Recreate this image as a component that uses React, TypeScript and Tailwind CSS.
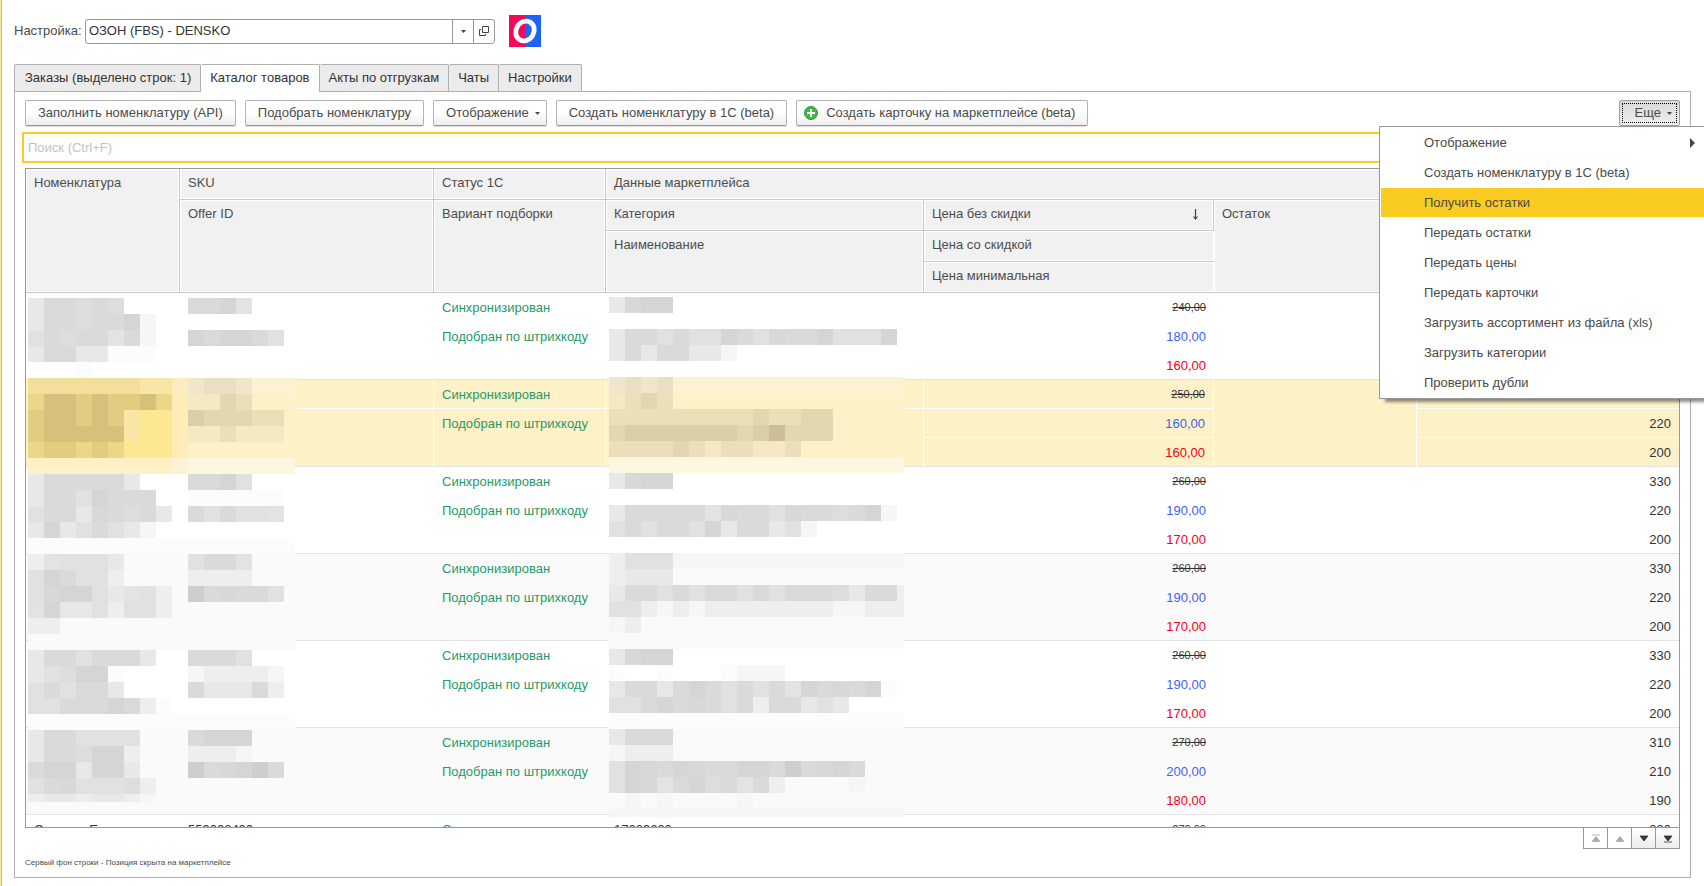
import { clsx } from "clsx";

interface Product {
  id: number;
  name?: string;
  sku?: string;
  category?: string;
  oldPrice: string;
  price: string;
  minPrice: string;
  values: string[];
  state?: "selected" | "hidden";
}

const products: Product[] = [
  { id: 1, oldPrice: "240,00", price: "180,00", minPrice: "160,00", values: ["310", "210", "190"] },
  { id: 2, oldPrice: "250,00", price: "160,00", minPrice: "160,00", values: ["330", "220", "200"], state: "selected" },
  { id: 3, oldPrice: "260,00", price: "190,00", minPrice: "170,00", values: ["330", "220", "200"] },
  { id: 4, oldPrice: "260,00", price: "190,00", minPrice: "170,00", values: ["330", "220", "200"], state: "hidden" },
  { id: 5, oldPrice: "260,00", price: "190,00", minPrice: "170,00", values: ["330", "220", "200"] },
  { id: 6, oldPrice: "270,00", price: "200,00", minPrice: "180,00", values: ["310", "210", "190"], state: "hidden" },
  {
    id: 7,
    name: "Сумочка Ева",
    sku: "559003400",
    category: "17039600",
    oldPrice: "270,00",
    price: "200,00",
    minPrice: "180,00",
    values: ["330", "220", "200"],
  },
];

const tabs = ["Заказы (выделено строк: 1)", "Каталог товаров", "Акты по отгрузкам", "Чаты", "Настройки"];

const menuItems = [
  "Отображение",
  "Создать номенклатуру в 1С (beta)",
  "Получить остатки",
  "Передать остатки",
  "Передать цены",
  "Передать карточки",
  "Загрузить ассортимент из файла (xls)",
  "Загрузить категории",
  "Проверить дубли",
];

// One letter per 16px block of a mosaic; a dot leaves the cell uncovered
const palette: Record<string, string> = {
  a: "#fcfcfc",
  b: "#f6f6f6",
  c: "#eeeeee",
  d: "#e8e8e8",
  e: "#e1e1e1",
  f: "#dadada",
  g: "#d5d5d5",
  h: "#cecece",
  i: "#dddde0",
  j: "#e2e4e4",
  k: "#fafafa",
  m: "#d8d7da",
  A: "#f2df9c",
  B: "#f8e6a6",
  C: "#fdecc0",
  D: "#ffecb8",
  E: "#ecd687",
  F: "#d6c07c",
  G: "#e2cc80",
  H: "#fde791",
  I: "#fff1c6",
  J: "#fdf2d5",
  K: "#fcf7e0",
  L: "#efe6cb",
  M: "#e9dfc2",
  N: "#fcf1d3",
  O: "#f4e9c3",
  P: "#ebdfba",
  Q: "#e3d7b1",
  R: "#dbcfa8",
  S: "#cbbe98",
  Y: "#fdf1c8",
};

const nameMosaic = [
  "dffifi....ffgj",
  "dffiffgb",
  "efiffjfb..gfggfe",
  "dffddaaa",
  "...a",
  "AAAAAAABBCLMMLNNN",
  "EFFGFGGFEDOOQPYYY",
  "GFFGFGBHHDRQQQPPY",
  "GFFFFFBHHDOOPOOOY",
  "EGGEGEHHHDYYYYYYY",
  "IIIIIIIIIJKKKKKKK",
  "dfffffd...ffge",
  "dffegfff..aaaaaa",
  "effdmfifd.fefeej",
  "dgdefedb",
  "aaaaaaaaaaaaaaaaa",
  "cjeeed....effj",
  "egfeec....cccc",
  "emggedjec.hfmffe",
  "jgddeceec",
  "cc",
  "kkkkkkkkkkkkkkkkk",
  "dffefffd..fffe",
  "deigga....bccccb",
  "efeffd....fdddfc",
  "eefffgfca",
  "aaaaaaaaaaaaaaaaa",
  "dffeeee...fggg",
  "dffiggc...cccb",
  "fggdggd...hfmghf",
  "efmeeeic",
  "cddcddcb",
];

const categoryMosaic = [
  "dmgg",
  "",
  "dffefeegfemffgeeeg",
  "dfdffddb",
  "",
  "LMLMNNNNNNNNNNNNNNN",
  "OPQPYYYYYYYYYYYYYYY",
  "PPPPPPPPPQPPQQYYYYY",
  "QRRRRRRRQRSQQQYYYYY",
  "PPPPQPOPPOOPYYYYYYY",
  "KKKKKKKKKKKKKKKKKKK",
  "dmgg",
  "",
  "dfffffjmffemffifgb",
  "efeffegdffdeb",
  "",
  "ceeebbbbbbbbbbbbbbb",
  "cddd",
  "dffefeffefefffidffc",
  "eecbcbccccccccbbccc",
  "bc",
  "kkkkkkkkkkkkkkkkkkk",
  "dmgg",
  "a..a...abbb",
  "dffdfgfefefjgfmfga",
  "eefgfmfefcffded",
  "aaaaaaaaaaaaaaaaaaa",
  "dfff",
  "bccc",
  "egmfgmffggfhfmgf",
  "egmjfgifjfc....b",
  "kbkbkkkkb",
  "bbbbbbbbbbbbbbbbbbb",
];

const Mosaic = ({ rows, className }: { rows: string[]; className: string }) => (
  <svg className={clsx("absolute", className)} shapeRendering="crispEdges" aria-hidden="true">
    {rows.map((row, y) =>
      row
        .split("")
        .map((code, x) =>
          code === "." ? null : (
            <rect key={`${x}-${y}`} x={x * 16} y={y * 16} width={16} height={16} fill={palette[code]} />
          ),
        ),
    )}
  </svg>
);

const Caret = ({ className }: { className?: string }) => (
  <svg className={className} width="5" height="3" viewBox="0 0 5 3" aria-hidden="true">
    <path d="M0 0h5L2.5 3z" fill="currentColor" />
  </svg>
);

const OzonLogo = () => (
  <svg width="32" height="32" viewBox="0 0 32 32" aria-hidden="true">
    <path d="M0 0h16v32H0z" fill="#f5085a" />
    <path d="M16 0h16v32H16z" fill="#1c62fb" />
    <ellipse
      cx="16"
      cy="16"
      rx="8.9"
      ry="10.2"
      fill="none"
      stroke="#fff"
      strokeWidth="4.8"
      transform="rotate(32 16 16)"
    />
  </svg>
);

const buttonClass =
  "flex h-[26px] items-center rounded-[2px] border border-[#b3b3b3] border-b-[#989898] bg-gradient-to-b from-white from-50% to-[#ededed] px-3 whitespace-nowrap shadow-[0_1px_0_#dcdcdc]";

const headClass =
  "h-[31px] border-r border-b border-[#c8c8c8] bg-[#f1f1f1] px-2 pt-[6px] text-left align-top leading-4 font-normal shadow-[inset_0_0_0_1px_#fff] last:border-r-0";

const Line = ({ className, children }: { className?: string; children?: React.ReactNode }) => (
  <div className={clsx("h-[29px] truncate px-2 leading-[29px]", className)}>{children}</div>
);

// The third line gives up one pixel to the row's bottom border
const LastLine = ({ className, children }: { className?: string; children?: React.ReactNode }) => (
  <div className={clsx("h-7 px-2 leading-[30px]", className)}>{children}</div>
);

const ProductRow = ({ product }: { product: Product }) => {
  const selected = product.state === "selected";
  const cell = clsx(
    "border-b border-b-[#e2e2e2] p-0 align-top",
    selected && "border-r border-r-white bg-[#fdf1c8] last:border-r-0",
    product.state === "hidden" && "bg-[#fafafa]",
  );
  const split = selected && "border-b border-white";

  return (
    <tr className="h-[87px]">
      <td className={cell}>
        <Line>{product.name}</Line>
      </td>
      <td className={cell}>
        <Line className={clsx(split)}>{product.sku}</Line>
      </td>
      <td className={clsx(cell, "text-[#259a68]")}>
        <Line className={clsx(split)}>Синхронизирован</Line>
        <Line>Подобран по штрихкоду</Line>
      </td>
      <td className={cell}>
        <Line className={clsx(split)}>{product.category}</Line>
      </td>
      <td className={clsx(cell, "text-right")}>
        <Line className={clsx("text-[11px] line-through", split)}>{product.oldPrice}</Line>
        <Line className={clsx("text-[#3f5efb]", split)}>{product.price}</Line>
        <LastLine className="text-[#f50014]">{product.minPrice}</LastLine>
      </td>
      <td className={cell}></td>
      <td className={clsx(cell, "text-right")}>
        <Line className={clsx(split)}>{product.values[0]}</Line>
        <Line className={clsx(split)}>{product.values[1]}</Line>
        <LastLine>{product.values[2]}</LastLine>
      </td>
    </tr>
  );
};

const ProductTable = () => (
  <div className="relative min-h-0 flex-1 overflow-hidden border border-[#999]">
    <table className="w-full table-fixed border-separate border-spacing-0 text-[#333]">
      <colgroup>
        <col className="w-[154px]" />
        <col className="w-[254px]" />
        <col className="w-[172px]" />
        <col className="w-[318px]" />
        <col className="w-[290px]" />
        <col className="w-[203px]" />
        <col />
      </colgroup>
      <thead className="text-[#4d4d4d]">
        <tr>
          <th rowSpan={4} className={headClass}>Номенклатура</th>
          <th className={headClass}>SKU</th>
          <th className={headClass}>Статус 1С</th>
          <th colSpan={4} className={headClass}>Данные маркетплейса</th>
        </tr>
        <tr>
          <th rowSpan={3} className={headClass}>Offer ID</th>
          <th rowSpan={3} className={headClass}>Вариант подборки</th>
          <th className={headClass}>Категория</th>
          <th className={headClass}>
            <span className="flex items-center justify-between">
              Цена без скидки
              <svg className="mr-[6px]" width="7" height="11" viewBox="0 0 7 11" aria-hidden="true">
                <path d="M3.5 0v10M1.5 7.5l2 2.5 2-2.5" fill="none" stroke="#444" strokeWidth="1.2" />
              </svg>
            </span>
          </th>
          <th rowSpan={3} className={headClass}>Остаток</th>
          <th rowSpan={3} className={headClass}></th>
        </tr>
        <tr>
          <th rowSpan={2} className={headClass}>Наименование</th>
          <th className={clsx(headClass, "last:border-r")}>Цена со скидкой</th>
        </tr>
        <tr>
          <th className={clsx(headClass, "last:border-r")}>Цена минимальная</th>
        </tr>
      </thead>
      <tbody>
        {products.map((product) => (
          <ProductRow key={product.id} product={product} />
        ))}
      </tbody>
    </table>
    <Mosaic rows={nameMosaic} className="top-[129px] left-[2px] h-[504px] w-[267px]" />
    <Mosaic rows={categoryMosaic} className="top-[128px] left-[583px] h-[520px] w-[295px]" />
  </div>
);

const MoreMenu = () => (
  <div className="relative">
    <button
      type="button"
      aria-expanded="true"
      className="flex h-[26px] w-[61px] rounded-[2px] border border-[#a0a0a0] bg-gradient-to-b from-[#d9d9d9] to-[#efefef] p-[2px]"
    >
      <span className="flex h-full w-full items-center justify-end gap-[6px] border border-dotted border-black pr-1">
        Еще <Caret />
      </span>
    </button>
    <ul className="absolute top-full -right-6 z-10 flex w-[325px] flex-col gap-px border border-r-0 border-[#999] bg-white py-px pl-px shadow-[6px_3px_3px_rgba(0,0,0,0.45)]">
      {menuItems.map((item, index) => (
        <li key={item}>
          <button
            type="button"
            className={clsx(
              "flex h-[29px] w-full items-center justify-between pr-[9px] pl-[43px] text-left whitespace-nowrap",
              index === 2 && "bg-[#facb20]",
            )}
          >
            {item}
            {index === 0 && (
              <svg width="5" height="10" viewBox="0 0 5 10" aria-hidden="true">
                <path d="M0 0l5 5-5 5z" fill="#444" />
              </svg>
            )}
          </button>
        </li>
      ))}
    </ul>
  </div>
);

const scrollButtons = [
  { label: "В начало", path: "M2 1h8M6 2.5l4 5H2z", enabled: false },
  { label: "Вверх", path: "M6 2.5l4 5H2z", enabled: false },
  { label: "Вниз", path: "M2 2h8L6 7z", enabled: true },
  { label: "В конец", path: "M2 2h8L6 7zM2 8h8", enabled: true },
];

const App = () => {
  return (
    <div className="flex h-screen flex-col overflow-hidden border-l border-[#fbe99b] bg-white font-['Liberation_Sans',Arial,sans-serif] text-[13px] text-[#4a4a4a]">
      <div className="flex min-h-0 flex-1 flex-col border-l border-[#c9bc82] pt-[15px] pr-[13px] pb-2 pl-3">
        <div className="flex h-8 items-center">
          <label htmlFor="setting" className="w-[71px]">
            Настройка:
          </label>
          <div className="flex h-[25px] w-[410px] rounded-[3px] border border-[#999] text-[#444]">
            <input
              id="setting"
              type="text"
              defaultValue="ОЗОН (FBS) - DENSKO"
              className="min-w-0 flex-1 px-[3px] text-[#333] outline-none"
            />
            <button
              type="button"
              aria-label="Выбрать"
              className="flex w-[21px] items-center justify-center border-l border-[#999]"
            >
              <Caret />
            </button>
            <button
              type="button"
              aria-label="Открыть"
              className="flex w-[21px] items-center justify-center border-l border-[#999]"
            >
              <svg width="10" height="10" viewBox="0 0 10 10" fill="none" stroke="#444" aria-hidden="true">
                <path d="M3.5.5h6v6h-6zM2 3.5H.5v6h6V8" />
              </svg>
            </button>
          </div>
          <div className="ml-[14px]">
            <OzonLogo />
          </div>
        </div>

        <div role="tablist" className="mt-[17px] flex">
          {tabs.map((tab, index) => (
            <button
              key={tab}
              type="button"
              role="tab"
              aria-selected={index === 1}
              className={clsx(
                "h-[27px] rounded-t-[2px] border-t border-r border-[#b0b0b0] px-[9px] whitespace-nowrap text-[#333] first:border-l first:pl-[10px]",
                index === 1 ? "relative -mb-px h-[28px] bg-white pb-px" : "bg-[#ebebeb]",
              )}
            >
              {tab}
            </button>
          ))}
        </div>

        <div className="flex min-h-0 flex-1 flex-col border border-[#b0b0b0] px-[10px] pt-2">
          <div className="flex items-center gap-[9px]">
            <button type="button" className={buttonClass}>
              Заполнить номенклатуру (API)
            </button>
            <button type="button" className={buttonClass}>
              Подобрать номенклатуру
            </button>
            <button type="button" className={clsx(buttonClass, "gap-[6px] pr-[6px]")}>
              Отображение <Caret />
            </button>
            <button type="button" className={buttonClass}>
              Создать номенклатуру в 1С (beta)
            </button>
            <button type="button" className={clsx(buttonClass, "gap-2 pl-[7px]")}>
              <svg width="14" height="14" viewBox="0 0 14 14" aria-hidden="true">
                <circle cx="7" cy="7" r="6.5" fill="#43b649" stroke="#2c9a3c" />
                <path d="M7 3v8M3 7h8" stroke="#fff" strokeWidth="2" />
              </svg>
              Создать карточку на маркетплейсе (beta)
            </button>
            <div className="ml-auto">
              <MoreMenu />
            </div>
          </div>

          <input
            type="search"
            aria-label="Поиск"
            placeholder="Поиск (Ctrl+F)"
            className="-mx-[3px] mt-[6px] mb-[5px] h-[31px] shrink-0 border-2 border-[#facb20] px-1 outline-none placeholder:text-[#c0c4c4]"
          />

          <ProductTable />

          <div className="-mt-px flex justify-end">
            {scrollButtons.map(({ label, path, enabled }) => (
              <button
                key={label}
                type="button"
                aria-label={label}
                disabled={!enabled}
                className={clsx(
                  "relative -ml-px flex h-[22px] w-[25px] items-center justify-center border border-[#999]",
                  enabled ? "bg-gradient-to-b from-white to-[#ececec] text-[#333]" : "bg-white text-[#aaa]",
                )}
              >
                <svg width="12" height="9" viewBox="0 0 12 9" aria-hidden="true">
                  <path d={path} fill="currentColor" stroke="currentColor" strokeWidth="0.8" />
                </svg>
              </button>
            ))}
          </div>
          <p className="mt-2 mb-2 text-[8px] leading-3">Сервый фон строки - Позиция скрыта на маркетплейсе</p>
        </div>
      </div>
    </div>
  );
};

export default App;
